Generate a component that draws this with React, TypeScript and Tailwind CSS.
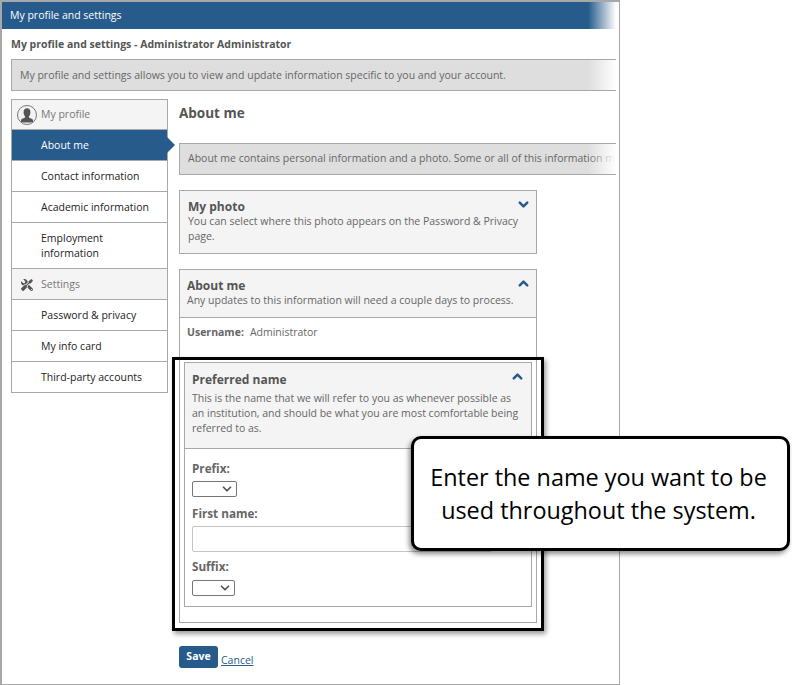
import { ChevronDown, ChevronUp } from "lucide-react";
import { FaTools } from "react-icons/fa";

const font = { fontFamily: '"Open Sans", sans-serif' };

function Fade() {
  return <div className="absolute top-0 bottom-0 right-0 w-[28px] bg-gradient-to-r from-white/0 to-white" />;
}

function Banner({ children, className }: { children: React.ReactNode; className: string }) {
  return (
    <div className={`relative h-[32px] flex items-center bg-[#dedede] border-y border-l border-[#a8a8a8] overflow-hidden whitespace-nowrap text-[#666] ${className}`}>
      {children}
      <Fade />
    </div>
  );
}

function NavItem({ label, active, tall }: { label: string; active?: boolean; tall?: boolean }) {
  return (
    <div className={`relative min-h-[31px] pl-[29px] pr-3 pt-[8px] border-b border-[#a8a8a8] leading-[15px] ${tall ? "pb-[7px]" : "pb-[6px]"} ${active ? "bg-[#265b8c] text-white" : "bg-white text-[#222]"}`}>
      {label}
      {active && <div className="absolute left-full top-[7px] w-0 h-0 border-y-[8px] border-y-transparent border-l-[8px] border-l-[#265b8c]" />}
    </div>
  );
}

function NavHeader({ icon, label, className }: { icon: React.ReactNode; label: string; className: string }) {
  return (
    <div className={`flex items-center bg-[#f4f4f4] border-b border-[#a8a8a8] text-[#777] ${className}`}>
      <div className="w-[29px] flex justify-center pl-[1px]">{icon}</div>
      {label}
    </div>
  );
}

function Label({ children }: { children: React.ReactNode }) {
  return <div className="font-bold text-[11.7px] text-[#666] leading-[15px]">{children}</div>;
}

function Select({ width }: { width: string }) {
  return (
    <div className={`h-[16px] flex items-center justify-end pr-[2px] rounded-[2px] border border-[#767676] bg-white ${width}`}>
      <ChevronDown size={14} strokeWidth={3} className="text-[#555]" />
    </div>
  );
}

function UserIcon() {
  return (
    <div className="w-[20px] h-[20px] rounded-full border border-[#777] bg-[#f4f4f4] overflow-hidden">
      <svg viewBox="0 0 18 18" className="w-[18px] h-[18px]">
        <ellipse cx="9" cy="6.5" rx="3.4" ry="4.2" fill="#555" />
        <path d="M7.2 9.5h3.6l.4 2.3c1.8.6 3.4 1.2 3.8 2.2v2.5H3V14c.4-1 2-1.6 3.8-2.2z" fill="#555" />
      </svg>
    </div>
  );
}

export default function App() {
  return (
    <div style={font} className="relative w-[792px] h-[685px] bg-white text-[10.5px] overflow-hidden">
      <div className="w-[620px] h-[685px] border-2 border-[#a8a8a8] border-r-0 border-b-0 relative">
        <div className="absolute top-[-2px] bottom-0 right-0 w-[1px] bg-[#a8a8a8]" />
        <div className="absolute bottom-0 left-[-2px] right-0 h-[1px] bg-[#a8a8a8]" />

        <div className="relative h-[27px] mr-[4px] pl-[8px] flex items-center bg-[#265b8c] text-white overflow-hidden">
          My profile and settings
          <Fade />
        </div>

        <div className="pl-[9px] pt-[8px] font-bold text-[#555] leading-[15px]">My profile and settings - Administrator Administrator</div>

        <Banner className="ml-[9px] mr-[4px] mt-[7px] pl-[8px] pt-[1px]">
          My profile and settings allows you to view and update information specific to you and your account.
        </Banner>

        <div className="flex mt-[8px] ml-[9px]">
          <div className="w-[157px] h-fit border-x border-t border-[#a8a8a8] shrink-0">
            <NavHeader label="My profile" className="h-[30px]" icon={<UserIcon />} />
            <NavItem label="About me" active />
            <NavItem label="Contact information" />
            <NavItem label="Academic information" />
            <NavItem label="Employment information" tall />
            <NavHeader label="Settings" className="h-[31px] pt-[1px]" icon={<FaTools size={12} className="text-[#555] -scale-x-100" />} />
            <NavItem label="Password & privacy" />
            <NavItem label="My info card" />
            <NavItem label="Third-party accounts" />
          </div>

          <div className="ml-[11px] flex-1 min-w-0">
            <div className="text-[13.5px] font-bold text-[#555] leading-[20px] mt-[4px]">About me</div>

            <Banner className="mt-[20px] mr-[4px] pl-[8px]">
              About me contains personal information and a photo. Some or all of this information m
            </Banner>

            <div className="relative w-[358px] h-[64px] mt-[15px] bg-[#f4f4f4] border border-[#a8a8a8] px-[8px] pt-[9px] text-[#666] leading-[15px]">
              <div className="font-bold text-[12px] leading-[14px] text-[#555]">My photo</div>
              You can select where this photo appears on the Password &amp; Privacy page.
              <ChevronDown size={15} strokeWidth={4} className="absolute top-[6px] right-[5px] text-[#265b8c]" />
            </div>

            <div className="w-[358px] h-[354px] mt-[15px] border border-[#a8a8a8]">
              <div className="relative h-[48px] bg-[#f4f4f4] border-b border-[#a8a8a8] px-[7px] pt-[9px] text-[#666] leading-[15px]">
                <div className="font-bold text-[12px] leading-[14px] text-[#555]">About me</div>
                Any updates to this information will need a couple days to process.
                <ChevronUp size={15} strokeWidth={4} className="absolute top-[6px] right-[5px] text-[#265b8c]" />
              </div>
              <div className="pl-[7px] pt-[7px] text-[#666] leading-[15px]">
                <span className="font-bold">Username:</span>
                <span className="ml-[6px]">Administrator</span>
              </div>

              <div className="mx-[4px] mt-[22px] h-[245px] border border-[#a8a8a8]">
                <div className="relative h-[86px] bg-[#f4f4f4] border-b border-[#a8a8a8] px-[7px] pt-[9px] text-[#666] leading-[15px]">
                  <div className="font-bold text-[12px] text-[#555] mb-[4px]">Preferred name</div>
                  This is the name that we will refer to you as whenever possible as an institution, and should be what you are most comfortable being referred to as.
                  <ChevronUp size={15} strokeWidth={4} className="absolute top-[6px] right-[6px] text-[#265b8c]" />
                </div>
                <div className="pl-[7px] pt-[12px]">
                  <Label>Prefix:</Label>
                  <div className="mt-[5px]"><Select width="w-[45px]" /></div>
                  <div className="mt-[9px]"><Label>First name:</Label></div>
                  <div className="mt-[5px] w-[300px] h-[26px] rounded-[2px] border border-[#c4c4c4] bg-white" />
                  <div className="mt-[7px]"><Label>Suffix:</Label></div>
                  <div className="mt-[6px]"><Select width="w-[43px]" /></div>
                </div>
              </div>
            </div>

            <div className="flex items-end mt-[23px]">
              <div className="w-[39px] h-[22px] rounded-[3px] bg-[#265b8c] text-white font-bold flex items-center justify-center">Save</div>
              <a className="ml-[3px] text-[#265b8c] underline leading-[15px]">Cancel</a>
            </div>
          </div>
        </div>
      </div>

      <div className="absolute left-[172px] top-[357px] w-[372px] h-[274px] border-[3px] border-black shadow-[2px_3px_5px_rgba(0,0,0,0.4)]" />

      <div className="absolute left-[411px] top-[436px] w-[379px] h-[115px] rounded-[10px] border-[3px] border-black bg-white shadow-[-2px_3px_5px_rgba(0,0,0,0.45)] flex items-center justify-center pr-[4px] text-center text-[23.4px] leading-[33px] text-black">
        <div>Enter the name you want to be<br />used throughout the system.</div>
      </div>
    </div>
  );
}
